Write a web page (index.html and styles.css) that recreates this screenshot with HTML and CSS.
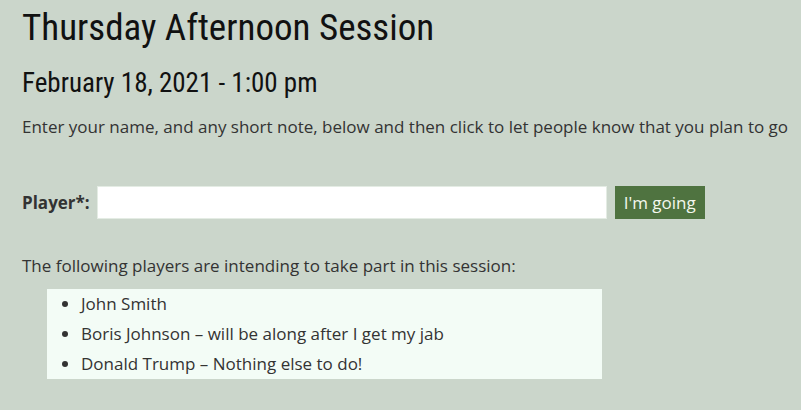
FILE: index.html
```html
<!DOCTYPE html>
<html>
<head>
<meta charset="utf-8">
<link rel="stylesheet" href="styles.css">
</head>
<body>
<main class="page">
  <h1 class="title">Thursday Afternoon Session</h1>
  <h2 class="date">February 18, 2021 - 1:00 pm</h2>
  <p class="intro">Enter your name, and any short note, below and then click to let people know that you plan to go</p>
  <form class="signup">
    <label class="label" for="player">Player*:</label>
    <input class="field" id="player" type="text">
    <button class="btn" type="button">I'm going</button>
  </form>
  <p class="lead">The following players are intending to take part in this session:</p>
  <ul class="players">
    <li>John Smith</li>
    <li>Boris Johnson – will be along after I get my jab</li>
    <li>Donald Trump – Nothing else to do!</li>
  </ul>
</main>
</body>
</html>
```

FILE: styles.css
```css
html, body {
  margin: 0;
  padding: 0;
  background: #cbd6cb;
}
.page {
  padding: 6px 0 0 22px;
  font-family: "Open Sans", sans-serif;
  color: #333;
  font-size: 17px;
}
.title {
  margin: 0;
  font-family: Roboto, sans-serif;
  font-stretch: condensed;
  font-weight: 400;
  font-size: 37px;
  line-height: 44px;
  color: #111;
}
.date {
  margin: 18px 0 0;
  font-family: Roboto, sans-serif;
  font-stretch: condensed;
  font-weight: 400;
  font-size: 27px;
  line-height: 30px;
  color: #111;
}
.intro {
  margin: 16px 0 0;
  line-height: 26px;
  white-space: nowrap;
}
.signup {
  display: flex;
  align-items: center;
  margin-top: 46px;
}
.label {
  font-weight: 700;
  margin-right: 7px;
}
.field {
  width: 510px;
  height: 33px;
  box-sizing: border-box;
  border: 1px solid #e4ece4;
  background: #fff;
  margin: 0 8px 0 0;
  padding: 0 8px;
}
.btn {
  width: 90px;
  height: 33px;
  padding: 0;
  border: 0;
  background: #4f7340;
  color: #f4f8ee;
  font-family: "Open Sans", sans-serif;
  font-size: 17px;
}
.lead {
  margin: 34px 0 0;
  line-height: 26px;
}
.players {
  margin: 10px 0 0 25px;
  width: 555px;
  box-sizing: border-box;
  background: #f3fcf6;
  padding: 0 0 0 34px;
  list-style: disc;
}
.players li {
  line-height: 30px;
}
```
